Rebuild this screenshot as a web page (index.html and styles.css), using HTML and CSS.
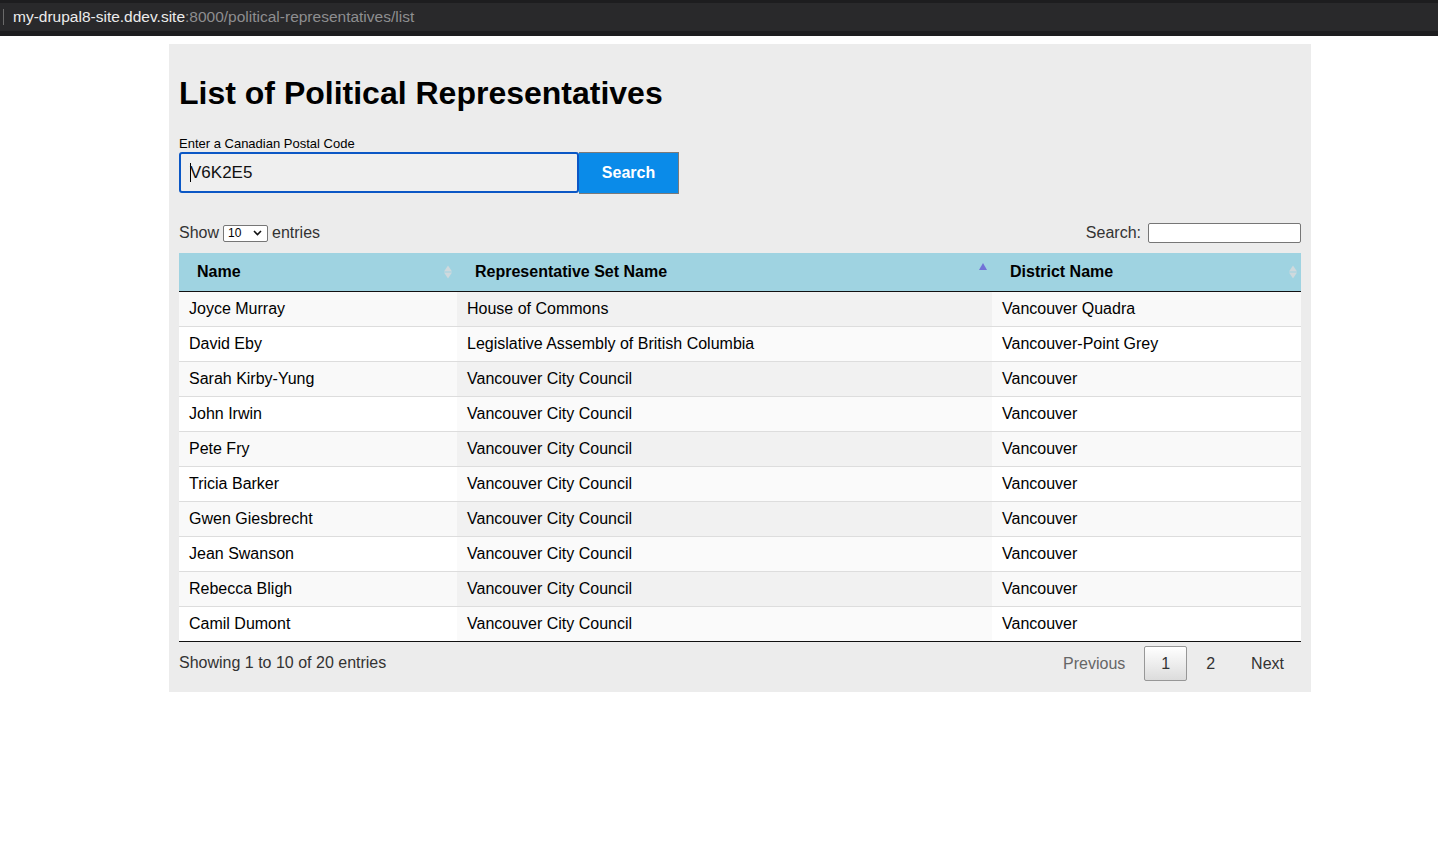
FILE: index.html
```html
<!DOCTYPE html>
<html lang="en">
<head>
<meta charset="utf-8">
<title>List of Political Representatives</title>
<link rel="stylesheet" href="styles.css">
</head>
<body>
<div class="chrome">
  <div class="urlbar"><span class="caret-line"></span><span class="host">my-drupal8-site.ddev.site</span><span class="path">:8000/political-representatives/list</span></div>
</div>
<main class="page">
  <h1 class="title">List of Political Representatives</h1>
  <form class="postal-form">
    <label class="postal-label" for="postal">Enter a Canadian Postal Code</label>
    <div class="postal-row">
      <div class="postal-input"><span class="cursor"></span>V6K2E5</div>
      <button type="button" class="search-btn">Search</button>
    </div>
  </form>
  <div class="dt-top">
    <div class="dt-length">Show <span class="select">10<svg class="chev" width="9" height="6" viewBox="0 0 9 6"><path d="M1 1l3.5 3.5L8 1" fill="none" stroke="#111" stroke-width="1.6"/></svg></span> entries</div>
    <div class="dt-filter">Search: <span class="filter-input"></span></div>
  </div>
  <table class="dt">
    <colgroup><col class="c1"><col class="c2"><col class="c3"></colgroup>
    <thead>
      <tr>
        <th>Name<span class="sort both"><i class="up"></i><i class="down"></i></span></th>
        <th>Representative Set Name<span class="sort asc"><i class="up"></i></span></th>
        <th>District Name<span class="sort both"><i class="up"></i><i class="down"></i></span></th>
      </tr>
    </thead>
    <tbody>
      <tr class="odd"><td>Joyce Murray</td><td class="sorted">House of Commons</td><td>Vancouver Quadra</td></tr>
      <tr class="even"><td>David Eby</td><td class="sorted">Legislative Assembly of British Columbia</td><td>Vancouver-Point Grey</td></tr>
      <tr class="odd"><td>Sarah Kirby-Yung</td><td class="sorted">Vancouver City Council</td><td>Vancouver</td></tr>
      <tr class="even"><td>John Irwin</td><td class="sorted">Vancouver City Council</td><td>Vancouver</td></tr>
      <tr class="odd"><td>Pete Fry</td><td class="sorted">Vancouver City Council</td><td>Vancouver</td></tr>
      <tr class="even"><td>Tricia Barker</td><td class="sorted">Vancouver City Council</td><td>Vancouver</td></tr>
      <tr class="odd"><td>Gwen Giesbrecht</td><td class="sorted">Vancouver City Council</td><td>Vancouver</td></tr>
      <tr class="even"><td>Jean Swanson</td><td class="sorted">Vancouver City Council</td><td>Vancouver</td></tr>
      <tr class="odd"><td>Rebecca Bligh</td><td class="sorted">Vancouver City Council</td><td>Vancouver</td></tr>
      <tr class="even"><td>Camil Dumont</td><td class="sorted">Vancouver City Council</td><td>Vancouver</td></tr>
    </tbody>
  </table>
  <div class="dt-bottom">
    <div class="dt-info">Showing 1 to 10 of 20 entries</div>
    <div class="dt-paginate">
      <span class="pg disabled">Previous</span>
      <span class="pg current">1</span>
      <span class="pg">2</span>
      <span class="pg">Next</span>
    </div>
  </div>
</main>
</body>
</html>
```

FILE: styles.css
```css
* { box-sizing: border-box; }
html, body { margin: 0; padding: 0; background: #fff; }
body { font-family: "Liberation Sans", Arial, sans-serif; color: #000; }

.chrome { background: #1d1d1f; padding: 3px 0 5px; height: 36px; }
.urlbar { background: #29292b; height: 28px; display: flex; align-items: center; font-size: 15.5px; padding-left: 3px; }
.caret-line { width: 1px; height: 16px; background: #6a6a6a; margin-right: 9px; }
.host { color: #ececec; }
.path { color: #8e8e90; }

.page { width: 1142px; margin: 8px 0 0 169px; background: #ececec; padding: 8px 10px 11px; }
.title { font-size: 32px; font-weight: bold; line-height: 37px; margin: 23px 0 24px; }

.postal-label { display: block; font-size: 13px; line-height: 15px; margin-bottom: 1px; }
.postal-row { display: flex; }
.postal-input { width: 400px; height: 41px; border: 2px solid #0b57c5; border-radius: 3px; background: #efefef; font-size: 17px; display: flex; align-items: center; padding-left: 9px; color: #111; }
.cursor { width: 1px; height: 19px; background: #000; margin-right: -1px; }
.search-btn { width: 100px; height: 42px; background: #0a8be9; color: #fff; border: 1px solid #7a7a7a; border-left: 0; font-family: inherit; font-size: 16px; font-weight: bold; padding: 0; margin: 0; }

.dt-top { display: flex; justify-content: space-between; align-items: center; margin-top: 28px; height: 22px; font-size: 16px; color: #333; }
.dt-length { display: flex; align-items: center; gap: 4px; }
.select { display: inline-flex; align-items: center; justify-content: space-between; width: 45px; height: 17px; border: 1px solid #767676; border-radius: 2px; background: #fff; font-size: 12px; color: #000; padding: 0 5px 0 4px; }
.dt-filter { display: flex; align-items: center; gap: 7px; }
.filter-input { width: 153px; height: 20px; border: 1px solid #767676; border-radius: 2px; background: #fff; }

.dt { width: 100%; border-collapse: separate; border-spacing: 0; margin-top: 9px; font-size: 16px; }
.dt col.c1 { width: 278px; }
.dt col.c2 { width: 535px; }
.dt col.c3 { width: 309px; }
.dt th { background: #9fd3e1; text-align: left; font-weight: bold; padding: 10px 18px; line-height: 18px; border-bottom: 1px solid #111; position: relative; }
.dt td { padding: 8px 10px; line-height: 18px; border-top: 1px solid #ddd; }
.dt tbody tr:first-child td { border-top: 0; }
.dt tr.odd td { background: #f9f9f9; }
.dt tr.odd td.sorted { background: #f1f1f1; }
.dt tr.even td { background: #fff; }
.dt tr.even td.sorted { background: #fafafa; }
.dt tbody tr:last-child td { border-bottom: 1px solid #111; }

.sort { position: absolute; right: 5px; top: 50%; transform: translateY(-50%); display: flex; flex-direction: column; gap: 1px; }
.sort i { display: block; width: 0; height: 0; border-left: 4px solid transparent; border-right: 4px solid transparent; }
.sort.both .up { border-bottom: 6px solid #cfd9dd; }
.sort.both .down { border-top: 6px solid #cfd9dd; }
.sort.asc { top: 10px; transform: none; right: 5px; }
.sort.asc .up { border-bottom: 7px solid #7271d7; border-left-width: 4.5px; border-right-width: 4.5px; }
.dt th:last-child .sort { right: 4px; }

.dt-bottom { display: flex; justify-content: space-between; align-items: flex-start; padding-top: 4px; font-size: 16px; color: #333; }
.dt-info { padding-top: 8px; }
.dt-paginate { display: flex; align-items: center; }
.pg { display: inline-block; padding: 8px 16px; margin-left: 2px; border: 1px solid transparent; border-radius: 2px; line-height: 17px; color: #333; text-align: center; }
.pg.disabled { color: #666; }
.pg.current { border: 1px solid #979797; background: linear-gradient(to bottom, #fff 0%, #dcdcdc 100%); color: #333; }
```
